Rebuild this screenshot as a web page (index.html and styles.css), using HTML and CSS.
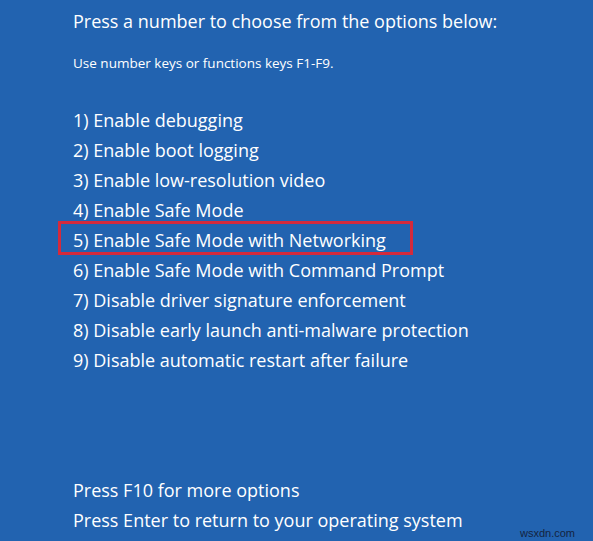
FILE: index.html
```html
<!DOCTYPE html>
<html lang="en">
<head>
<meta charset="utf-8">
<title>Startup Settings</title>
<link rel="stylesheet" href="styles.css">
</head>
<body>
<main class="screen">
  <h1 class="title">Press a number to choose from the options below:</h1>
  <p class="hint">Use number keys or functions keys F1-F9.</p>
  <ol class="options">
    <li class="option">1) Enable debugging</li>
    <li class="option">2) Enable boot logging</li>
    <li class="option">3) Enable low-resolution video</li>
    <li class="option">4) Enable Safe Mode</li>
    <li class="option option--marked">5) Enable Safe Mode with Networking</li>
    <li class="option">6) Enable Safe Mode with Command Prompt</li>
    <li class="option">7) Disable driver signature enforcement</li>
    <li class="option">8) Disable early launch anti-malware protection</li>
    <li class="option">9) Disable automatic restart after failure</li>
  </ol>
  <div class="footer">
    <p class="footer-line">Press F10 for more options</p>
    <p class="footer-line">Press Enter to return to your operating system</p>
  </div>
  <span class="watermark">wsxdn.com</span>
</main>
</body>
</html>
```

FILE: styles.css
```css
html, body {
  margin: 0;
  padding: 0;
  background: #2263b0;
}

.screen {
  position: relative;
  width: 593px;
  height: 541px;
  box-sizing: border-box;
  padding: 6px 0 0 73px;
  background: #2263b0;
  color: #ffffff;
  font-family: "Open Sans", "Noto Sans", sans-serif;
  overflow: hidden;
}

.title {
  margin: 0;
  font-size: 18px;
  font-weight: 400;
  line-height: 30px;
}

.hint {
  margin: 17px 0 0;
  font-size: 13.5px;
  line-height: 20px;
}

.options {
  list-style: none;
  margin: 32px 0 0;
  padding: 0;
}

.option {
  font-size: 18px;
  line-height: 30px;
}

.option--marked {
  position: relative;
}

.option--marked::after {
  content: "";
  position: absolute;
  left: -15px;
  top: -4px;
  width: 355px;
  height: 34px;
  box-sizing: border-box;
  border: 3px solid #d42a3c;
}

.footer {
  margin-top: 100px;
}

.footer-line {
  margin: 0;
  font-size: 18px;
  line-height: 30px;
}

.watermark {
  position: absolute;
  left: 520px;
  top: 526px;
  font-family: "Liberation Sans", Arial, sans-serif;
  font-size: 11px;
  line-height: 14px;
  color: #14233f;
}
```
